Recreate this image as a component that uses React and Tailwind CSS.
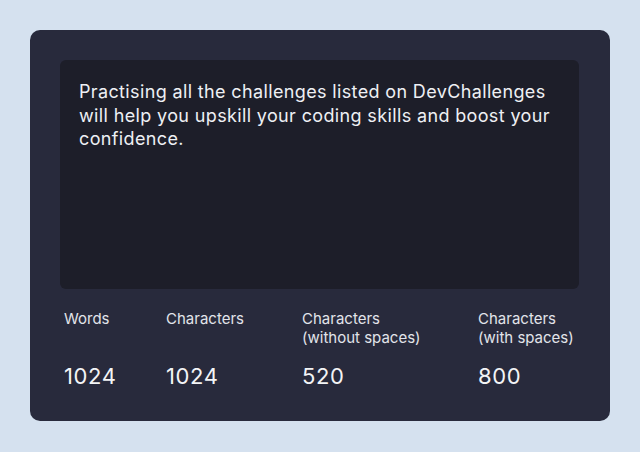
import React from 'react';

const stats = [
  { label: ['Words'], value: '1024', w: 'w-[102px]' },
  { label: ['Characters'], value: '1024', w: 'w-[136px]' },
  { label: ['Characters', '(without spaces)'], value: '520', w: 'w-[176px]' },
  { label: ['Characters', '(with spaces)'], value: '800', w: 'w-[100px]' },
];

export default function App() {
  return (
    <div className="w-[640px] h-[452px] bg-[#d5e1ef] p-[30px] font-['Inter',sans-serif]">
      <div className="h-[391px] rounded-[10px] bg-[#282a3c] p-[30px] pr-[31px]">
        {/* Text area */}
        <div className="h-[229px] rounded-md bg-[#1d1e29] px-[19px] pt-[20px] text-[18px] leading-[23.5px] tracking-[0.36px] text-[#eef0f4]">
          Practising all the challenges listed on DevChallenges will help you upskill your coding skills and boost your confidence.
        </div>

        {/* Stats */}
        <div className="flex px-1 pt-[20px]">
          {stats.map((s, i) => (
            <div key={i} className={`${s.w} shrink-0 flex flex-col whitespace-nowrap`}>
              <div className="h-[40px] text-[15px] leading-[19px] text-[#e2e4ea]">
                {s.label.map((l, j) => (
                  <div key={j}>{l}</div>
                ))}
              </div>
              <div className="mt-[13px] text-[22px] leading-[28px] tracking-[0.6px] text-[#f3f4f6]">{s.value}</div>
            </div>
          ))}
        </div>
      </div>
    </div>
  );
}
